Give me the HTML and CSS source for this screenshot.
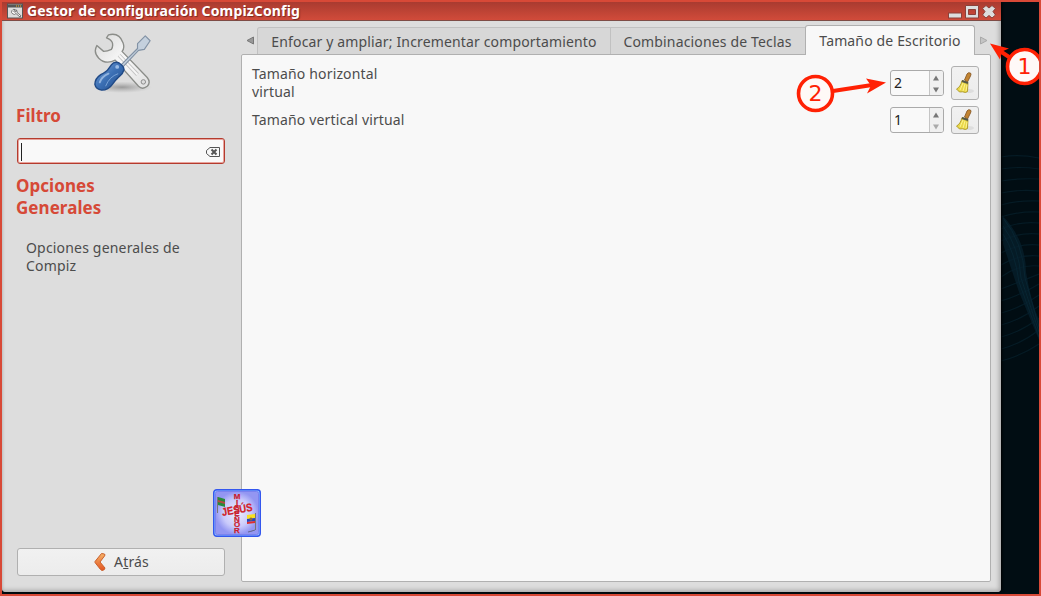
FILE: index.html
```html
<!DOCTYPE html>
<html lang="es">
<head>
<meta charset="utf-8">
<title>Gestor de configuración CompizConfig</title>
<link rel="stylesheet" href="styles.css">
</head>
<body>
<div class="desktop">
  <svg class="wallpaper" width="38" height="592" viewBox="0 0 38 592" fill="none">
    <g stroke="#051b25" stroke-width="1.2">
      <path d="M0 155Q18 152 38 156M0 167Q18 164 38 167M0 179Q18 176 38 177M0 191Q18 187 38 189M0 203Q18 198 38 199M0 215Q18 209 38 210M0 227Q18 219 38 221M0 239Q18 230 38 232M0 251Q18 241 38 243M0 263Q18 252 38 254M0 275Q18 262 38 264M0 287Q18 280 38 272M0 299Q20 293 38 282M0 311Q20 306 38 293M0 323Q20 318 38 304M0 335Q20 330 38 316M0 347Q20 342 38 328M0 359Q20 354 38 342"/>
    </g>
    <path d="M1 213Q25 238 25 270Q30 300 38 318V338L18 290L2 242Z" fill="#07202d" opacity=".75"/>
    <path d="M2 216Q22 240 24 276L38 325M2 224Q18 245 20 276L38 330M2 232Q14 250 18 280L38 335" stroke="#082532"/>
  </svg>
  <section class="window">
    <header class="titlebar">
      <svg class="app-icon" width="16" height="16" viewBox="0 0 16 16">
        <rect x=".5" y="1" width="15" height="14" fill="#ddd" stroke="#555"/>
        <path d="M1 1.500h14v3H1z" fill="#555"/>
        <path d="M9 2.500h1v1H9zM11 2.500h1v1h-1zM13 2.500h1v1h-1z" fill="#f5b52a"/>
        <path d="M8 6.500a2.500 2.500 0 1 0 1 4l4 3.500 1-1.200-4-3.300q.4-1.800-1-2.800v2l-1.500.5-.8-1z" fill="#fff" stroke="#555" stroke-width=".8"/>
      </svg>
      <h1 class="title">Gestor de configuración CompizConfig</h1>
      <svg class="controls" width="52" height="18" viewBox="0 0 52 18">
        <rect x="2.500" y="11" width="13" height="5" fill="#ddd" stroke="#8b4039"/>
        <path d="M19.500 3.500h13v12.500h-13zM22.500 7.500v5h7v-5z" fill="#ddd" fill-rule="evenodd" stroke="#8b4039"/>
        <path d="m40 3.500 3 2.500 3-2.500 3.500 3-2.500 3 2.500 3.500-3.500 3-3-2.500-3 2.500-3.500-3 2.500-3.500-2.500-3z" fill="#ddd" stroke="#8b4039" stroke-linejoin="round"/>
      </svg>
    </header>
    <div class="content">
      <aside class="sidebar">
        <svg class="tools" width="62" height="62" viewBox="0 0 64 64">
          <defs>
            <linearGradient id="handle" x1="0" y1="0" x2="1" y2="1"><stop stop-color="#7da7dc"/><stop offset=".5" stop-color="#3b6fb4"/><stop offset="1" stop-color="#204a87"/></linearGradient>
            <linearGradient id="steel" x1="0" y1="0" x2="1" y2="1"><stop stop-color="#d8d8d8"/><stop offset=".5" stop-color="#fafafa"/><stop offset="1" stop-color="#dedede"/></linearGradient>
            <radialGradient id="shade"><stop stop-color="#777" stop-opacity=".65"/><stop offset="1" stop-color="#999" stop-opacity="0"/></radialGradient>
          </defs>
          <ellipse cx="31" cy="57" rx="31" ry="6" fill="url(#shade)"/>
          <path d="M17 3q11-3 15 8 2 6-1 9l26 27q4 5 0 9-5 4-9 0L24 29q-10 5-17-2-6-6-2-13l7 6q4 0 8-2 2-3 1-7-1-3-6-5z" fill="url(#steel)" stroke="#8b8d89" stroke-width="1.400" stroke-linejoin="round"/>
          <circle cx="53" cy="51.500" r="2.300" fill="#ddd" stroke="#888"/>
          <path d="m28 24 19 20" stroke="#c5c5c5" stroke-width="4"/><path d="m28 24 19 20" stroke="#f7f7f7" stroke-width="2"/>
          <path d="m30 34 17-17v-5l8-8 5 5-6 9-6 1-16 17z" fill="#c4d0dd" stroke="#8292a5" stroke-width="1.200" stroke-linejoin="round"/>
          <path d="M20 34q3-4 8-2 5 3 5 7-1 4-5 7-4 4-7 8-4 6-11 6-6-1-7-6 0-6 6-10 6-3 8-6z" fill="url(#handle)" stroke="#204a87" stroke-width="1.500"/>
          <path d="M17 43q-7 3-9 9" stroke="#a9c7eb" stroke-width="2" fill="none" stroke-linecap="round" opacity=".75"/>
          <path d="M27 43q-9 3-13 13" stroke="#7ba4d7" fill="none"/>
          <circle cx="26" cy="36" r="2" fill="#9bbce6"/>
        </svg>
        <h2 class="heading">Filtro</h2>
        <div class="search">
          <span class="caret"></span>
          <svg width="16" height="12" viewBox="0 0 16 12"><path d="M5 1.500h9.500v9H5L1.500 7.500v-3z" fill="#f8f8f8" stroke="#555"/><path d="m6.500 3.500 5 5m0-5-5 5" stroke="#555" stroke-width="2"/></svg>
        </div>
        <h2 class="heading group">Opciones<br>Generales</h2>
        <p class="description">Opciones generales de<br>Compiz</p>
        <button class="back">
          <svg width="12" height="20" viewBox="0 0 12 20"><defs><linearGradient id="orange" x2="0" y2="1"><stop stop-color="#f6b369"/><stop offset="1" stop-color="#e35420"/></linearGradient></defs><path d="m7.500 1.500 3 .5q1 1 0 2L6 10l5 6q0 2-3 2.500L6.500 17.500 1 10.500v-1z" fill="url(#orange)" stroke="#c9602c"/></svg>
          <span>A<u>t</u>rás</span>
        </button>
      </aside>
      <main class="main">
        <nav class="tabs">
          <svg class="scroll-left" width="16" height="28" viewBox="0 0 16 28"><path d="M6 14.500 12.500 11v7z" fill="#999" stroke="#777"/></svg>
          <div class="tab zoom-tab"><span>Enfocar y ampliar; Incrementar comportamiento</span></div>
          <div class="tab keys-tab"><span>Combinaciones de Teclas</span></div>
          <div class="tab active"><span>Tamaño de Escritorio</span></div>
          <svg class="scroll-right" width="16" height="28" viewBox="0 0 16 28"><path d="m5.500 11 6.500 3.500-6.500 3.500z" fill="#c4c4c4" stroke="#a9a9a9"/></svg>
        </nav>
        <div class="panel">
          <div class="row first">
            <label>Tamaño horizontal<br>virtual</label>
            <div class="spin"><b>2</b><span><svg width="12" height="25" viewBox="0 0 12 25"><path d="m3 9.500 3-5 3 5zM3 16.500h6l-3 5z" fill="#777"/></svg></span></div>
            <button class="reset"><svg width="20" height="26" viewBox="0 0 20 26"><use href="#broom"/></svg></button>
          </div>
          <div class="row second">
            <label>Tamaño vertical virtual</label>
            <div class="spin"><b>1</b><span><svg width="12" height="25" viewBox="0 0 12 25"><path d="m3 9.500 3-5 3 5z" fill="#777"/><path d="M3 16.500h6l-3 5z" fill="#aaa"/></svg></span></div>
            <button class="reset"><svg width="20" height="26" viewBox="0 0 20 26">
              <g id="broom"><ellipse cx="13" cy="21" rx="6" ry="2" fill="#ddd"/><path d="m9.500 10 2.500-6q1-2 3.500-1 1 1 0 3l-3 6z" fill="#c28432" stroke="#80501d" stroke-width=".8"/><path d="m7 10.500 6 2-.5 9-2 1-3-.7-3 .2-3-3q4-2 5.500-8.500z" fill="#e9d849" stroke="#a28c17" stroke-width=".8"/><path d="m8 13-3 7m5-6-2 7m4-6-1 6" stroke="#fff391"/><path d="m7 11 6 2" stroke="#555848" stroke-width="2"/></g>
            </svg></button>
          </div>
        </div>
      </main>
    </div>
  </section>
  <svg class="badge" width="48" height="48" viewBox="0 0 48 48">
    <defs><radialGradient id="glow"><stop stop-color="#eeeefd"/><stop offset=".65" stop-color="#c9cafb"/><stop offset="1" stop-color="#9396f2"/></radialGradient></defs>
    <rect x=".7" y=".7" width="46.600" height="46.600" rx="3" fill="#8bb8ff" stroke="#3457ee" stroke-width="1.400"/>
    <rect x="2.500" y="2.500" width="43" height="43" rx="2" fill="url(#glow)" stroke="#7b82ef"/>
    <path d="M4.500 8v16" stroke="#777"/><path d="m5 8 7 2v8l-7-2z" fill="#278a3b"/><path d="m5 11 7 2v2l-7-2z" fill="#b84742"/>
    <path d="M42.500 24v17" stroke="#777"/><path d="m34 26 8-1v4l-8 1z" fill="#f7df22"/><path d="m34 30 8-1v3l-8 1z" fill="#2545bd"/><path d="m34 33 8-1v2l-8 1z" fill="#df2d2c"/><circle cx="38" cy="30" r="1.500" fill="#8d6b3b"/>
    <g class="logo-text"><text x="9.500" y="27" transform="rotate(-10 9.500 27)" textLength="31" lengthAdjust="spacingAndGlyphs">JESÚS</text><text class="vertical"><tspan x="24" y="10">M</tspan><tspan x="24" y="15.500">I</tspan><tspan x="24" y="21">S</tspan><tspan x="24" y="27">E</tspan><tspan x="24" y="32.500">Ñ</tspan><tspan x="24" y="38">O</tspan><tspan x="24" y="43.500">R</tspan></text></g>
    <path d="m35 43 4-1 3-1" stroke="#656991"/>
  </svg>
  <svg class="annotations" width="1041" height="596" viewBox="0 0 1041 596">
    <g fill="#fff9f7" stroke="#ff2104" stroke-width="3.600"><circle cx="815.500" cy="93.500" r="17"/><circle cx="1024.500" cy="66.500" r="17"/></g>
    <g stroke="#ff2104" stroke-width="4"><path d="m833 91 39-6M1009 57l-9-6"/></g>
    <path d="m886 82.500-20-4 5 7-4 8zM990 43.500l19 5-7 3-2 8z" fill="#ff2104"/>
    <g class="number"><text x="808.500" y="101">2</text><text x="1017.500" y="74">1</text></g>
  </svg>
</div>
</body>
</html>
```
FILE: styles.css
```css
* { box-sizing: border-box; }
body { margin: 0; font-family: "Noto Sans", "Open Sans", sans-serif; font-size: 14px; letter-spacing: .15px; color: #4c4c4c; }
h1, h2, p { margin: 0; }
button { font: inherit; letter-spacing: inherit; color: inherit; padding: 0; border: 1px solid #b0b0b0; border-radius: 3px; background: linear-gradient(#f1f1f1, #ececec); display: flex; align-items: center; justify-content: center; }
svg { display: block; flex: none; }
span, label, h1, h2, p { white-space: nowrap; }
.desktop { position: relative; width: 1041px; height: 596px; border: 2px solid #d84937; background: #010d13; overflow: hidden; }
.wallpaper { position: absolute; right: 0; top: 0; }
.window { position: relative; width: 999px; height: 590px; display: flex; flex-direction: column; background: #ddd; border-radius: 0 0 4px 4px; box-shadow: 1px 0 3px #000; overflow: hidden; }
.titlebar { height: 19px; flex: none; display: flex; align-items: center; padding: 0 3px 0 5px; gap: 4px; background: linear-gradient(#a93b30, #d14b3a); border-bottom: 1px solid #7e4c46; }
.title { flex: 1; color: #fff; font-size: 14px; line-height: 18px; font-weight: 700; text-shadow: 1px 1px 1px #7a2822; }
.content { flex: 1; display: flex; box-shadow: inset -4px -4px 4px -2px #aaa, inset 3px 0 3px -2px #bbb; }
.sidebar { width: 239px; flex: none; display: flex; flex-direction: column; padding: 11px 16px 16px 15px; }
.tools { margin-left: 75px; }
.heading { margin-left: -1px; margin-top: 11px; color: #d64937; font-size: 17px; line-height: 22px; font-weight: 700; letter-spacing: .05px; }
.search { margin-top: 11px; height: 26px; border: 1px solid #b43b2e; box-shadow: inset 0 0 0 1px #e8a39c; border-radius: 3px; background: #f9f9f9; display: flex; align-items: center; justify-content: space-between; padding: 1px 3px 0; }
.caret { width: 1px; height: 18px; background: #222; }
.group { margin-top: 11px; }
.description { margin: 20px 0 0 9px; line-height: 18px; letter-spacing: .18px; }
.back { margin-top: auto; height: 28px; gap: 8px; padding: 0 0 1px 1px; }
.main { flex: 1; min-width: 0; display: flex; flex-direction: column; padding: 5px 10px 10px 0; }
.tabs { height: 28px; display: flex; align-items: flex-end; }
.tab { height: 27px; flex: none; display: flex; align-items: center; justify-content: center; background: #d7d7d7; border: 1px solid #c1c1c1; border-bottom: 0; }
.zoom-tab { width: 354px; border-radius: 3px 0 0; }
.keys-tab { width: 194px; border-left: 0; border-right: 0; padding-right: 1px; }
.active { width: 170px; height: 30px; background: #f8f8f8; border-color: #b0b0b0; border-radius: 3px 3px 0 0; margin-bottom: -1px; position: relative; z-index: 1; }
.panel { flex: 1; width: 750px; background: #f8f8f8; border: 1px solid #b0b0b0; border-radius: 2px; padding: 10px 11px 0 10px; }
.row { display: flex; align-items: center; }
.row label { flex: 1; line-height: 18px; }
.first { height: 36px; }
.second { height: 28px; margin-top: 5px; }
.spin { width: 54px; height: 26px; display: flex; border: 1px solid #aaa; border-radius: 3px; background: #f9f9f9; margin-right: 7px; overflow: hidden; }
.spin b { width: 38px; padding-left: 3px; font-weight: 400; line-height: 24px; color: #222; }
.spin > span { flex: 1; border-left: 1px solid #c5c5c5; background: #f0f0f0; }
.reset { width: 28px; height: 28px; }
.first .reset { height: 34px; }
.badge { position: absolute; left: 211px; top: 487px; }
.logo-text { font: bold 11px "Liberation Sans", sans-serif; letter-spacing: 0; fill: #e02020; stroke: #a72348; stroke-width: .25px; }
.logo-text .vertical { font-size: 8px; text-anchor: middle; }
.annotations { position: absolute; left: -2px; top: -2px; }
.number { font: 22px "DejaVu Sans", sans-serif; fill: #ff2104; }
```
